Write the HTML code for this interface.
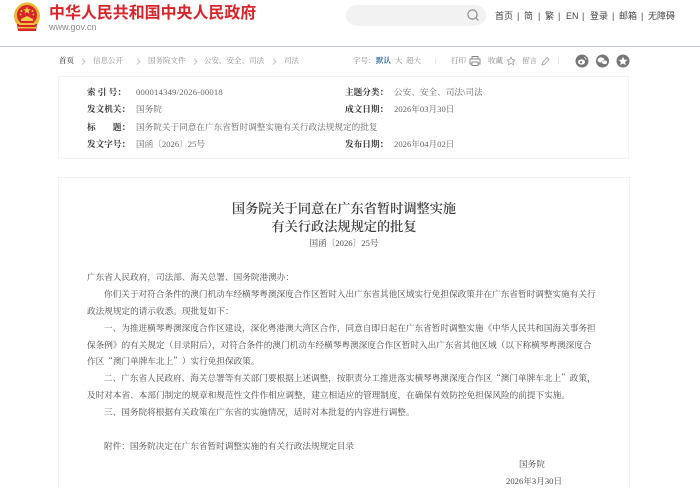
<!DOCTYPE html>
<html lang="zh-CN"><head><meta charset="utf-8"><title>国务院关于同意在广东省暂时调整实施有关行政法规规定的批复</title>
<style>
html,body{margin:0;padding:0;background:#fff;width:700px;height:488px;overflow:hidden}
#w{position:relative;width:700px;height:488px;overflow:hidden;filter:blur(.35px);font-family:"Liberation Serif","Noto Serif CJK SC",serif;color:#555}
#w div{position:absolute;white-space:nowrap}
.s{font-family:"Liberation Sans","Noto Sans CJK SC",sans-serif}
.l{font-size:8.65px;line-height:12px;color:#4a4a4a}
.c{font-family:"Noto Serif CJK SC","Liberation Serif",serif}
.k{font-size:8.65px;line-height:12px;font-weight:700;color:#333;left:87px}
.k2{left:345px}
.v{left:136px;font-size:8.65px;line-height:12px;color:#666}
.v2{left:394px}
.b{font-size:7.5px;line-height:10px;color:#8a8a8a;top:56px}
.n{font-size:9px;line-height:12px;color:#444;top:10px;font-family:"Liberation Sans","Noto Sans CJK SC",sans-serif}
.t{font-size:13.2px;line-height:18px;color:#3d3d3d;font-weight:600;left:58px;width:572px;text-align:center;font-family:"Noto Serif CJK SC",serif}
.h{position:absolute;top:58px}
</style></head><body><div id="w">
<svg style="position:absolute;left:13px;top:2px" width="28" height="31" viewBox="0 0 28 31">
<ellipse cx="14" cy="14" rx="13" ry="13.5" fill="#e9b92f"/>
<circle cx="14" cy="13" r="10" fill="#d8242a"/>
<path d="M4 22h20l-1 7H5z" fill="#d8242a"/>
<path d="M6 21h16v2H6zM5 25h18v1.500H5z" fill="#edc13a"/>
<path d="M14 4.500l1 2.800h3l-2.400 1.700.9 2.800-2.500-1.700-2.500 1.700.9-2.800L10 7.300h3z" fill="#f2cf3e"/>
<circle cx="8.500" cy="9" r="1" fill="#f2cf3e"/><circle cx="19.500" cy="9" r="1" fill="#f2cf3e"/><circle cx="7.500" cy="12.500" r=".9" fill="#f2cf3e"/><circle cx="20.500" cy="12.500" r=".9" fill="#f2cf3e"/>
<path d="M8 19v-2l6-3 6 3v2z" fill="#f2cf3e"/>
</svg>
<div class="s" style="left:49px;top:2.500px;font-size:15.95px;line-height:22px;font-weight:700;color:#d6252b">中华人民共和国中央人民政府</div>
<div class="s" style="left:49px;top:22px;font-size:9px;line-height:10px;color:#8c8c8c">www.gov.cn</div>

<div style="left:346px;top:5px;width:140px;height:21px;border-radius:11px;background:#f2f2f2"></div>
<svg style="position:absolute;left:466px;top:8px" width="14" height="14" viewBox="0 0 14 14"><circle cx="6.500" cy="6.500" r="4.600" fill="none" stroke="#8b8b8b" stroke-width="1.200"/><path d="M10 10l2.500 2.500" stroke="#8b8b8b" stroke-width="1.200"/></svg>
<div class="n" style="left:495px">首页</div><div class="n" style="left:517px">|</div>
<div class="n" style="left:524px">简</div><div class="n" style="left:538px">|</div>
<div class="n" style="left:545px">繁</div><div class="n" style="left:558px">|</div>
<div class="n" style="left:566px">EN</div><div class="n" style="left:582px">|</div>
<div class="n" style="left:590px">登录</div><div class="n" style="left:612px">|</div>
<div class="n" style="left:619px">邮箱</div><div class="n" style="left:641px">|</div>
<div class="n" style="left:648px">无障碍</div>

<div style="left:0;top:45.500px;width:700px;height:1.500px;background:#b9c8df"></div>

<div class="b" style="left:59px;font-weight:700;color:#666">首页</div>
<svg class="h" style="left:81px" width="5" height="7" viewBox="0 0 5 7"><path d="M1 .5l3 3-3 3" fill="none" stroke="#aaa" stroke-width=".7"/></svg>
<div class="b" style="left:93px">信息公开</div>
<svg class="h" style="left:136px" width="5" height="7" viewBox="0 0 5 7"><path d="M1 .5l3 3-3 3" fill="none" stroke="#aaa" stroke-width=".7"/></svg>
<div class="b" style="left:148px">国务院文件</div>
<svg class="h" style="left:193px" width="5" height="7" viewBox="0 0 5 7"><path d="M1 .5l3 3-3 3" fill="none" stroke="#aaa" stroke-width=".7"/></svg>
<div class="b" style="left:204px">公安、安全、司法</div>
<svg class="h" style="left:272px" width="5" height="7" viewBox="0 0 5 7"><path d="M1 .5l3 3-3 3" fill="none" stroke="#aaa" stroke-width=".7"/></svg>
<div class="b" style="left:284px">司法</div>

<div class="b" style="left:353px">字号：</div><div class="b" style="left:376px;color:#2a6496;font-weight:700">默认</div>
<div class="b" style="left:395px">大</div><div class="b" style="left:406px">超大</div><div class="b" style="left:435px;color:#bbb">|</div>
<div class="b" style="left:451px">打印</div>
<svg style="position:absolute;left:469px;top:55px" width="12" height="12" viewBox="0 0 12 12" fill="none" stroke="#888"><path d="M3 4V1.500h6V4M3 9H1V4h10v5H9M3 7h6v3.500H3z"/></svg>
<div class="b" style="left:488px">收藏</div>
<svg style="position:absolute;left:506px;top:56px" width="10" height="10" viewBox="0 0 10 10" fill="none" stroke="#999" stroke-width=".7"><path d="M5 1l1.200 2.700 2.900.3-2.200 1.900.7 2.900L5 7.300 2.400 8.800l.7-2.900L.9 4l2.900-.3z"/></svg>
<div class="b" style="left:522px">留言</div>
<svg style="position:absolute;left:541px;top:56px" width="9" height="10" viewBox="0 0 9 10" fill="none" stroke="#999" stroke-width=".8"><path d="M1 9l.5-2.500L6 1.500 8 3.500 3.300 8.500z"/></svg>
<div class="b" style="left:558px;color:#bbb">|</div>
<svg style="position:absolute;left:574px;top:53px" width="56" height="16" viewBox="0 0 56 16">
<circle cx="8" cy="8" r="6.500" fill="#777"/><ellipse cx="7.500" cy="9" rx="3.500" ry="2.600" fill="#fff"/><circle cx="7" cy="9.200" r="1.200" fill="#777"/><path d="M10 4.500a2 2 0 0 1 2 2.200" stroke="#fff" fill="none" stroke-width=".8"/>
<circle cx="28.500" cy="8" r="6.500" fill="#777"/><ellipse cx="27" cy="7" rx="3.400" ry="2.600" fill="#fff"/><ellipse cx="30.500" cy="9.300" rx="2.800" ry="2.100" fill="#fff" stroke="#777" stroke-width=".5"/>
<circle cx="49" cy="8" r="6.500" fill="#777"/><path d="M49 3.700l1.300 2.900 3.100.3-2.300 2.100.7 3.100-2.800-1.600-2.800 1.600.7-3.100-2.300-2.100 3.100-.3z" fill="#fff"/>
</svg>

<div style="left:58px;top:76px;width:571px;height:83px;border:1px solid #f3f3f3;box-sizing:border-box"></div>
<div style="left:58px;top:177px;width:572px;height:330px;border:1px solid #f1f1f1;box-sizing:border-box"></div>

<div class="k" style="top:86px">索 引 号：</div><div class="v" style="top:86px;letter-spacing:.2px">000014349/2026-00018</div>
<div class="k k2" style="top:86px">主题分类：</div><div class="v v2" style="top:86px">公安、安全、司法\司法</div>
<div class="k" style="top:103px">发文机关：</div><div class="v" style="top:103px">国务院</div>
<div class="k k2" style="top:103px">成文日期：</div><div class="v v2" style="top:103px">2026年03月30日</div>
<div class="k" style="top:120.500px">标　　题：</div><div class="v" style="top:120.500px">国务院关于同意在广东省暂时调整实施有关行政法规规定的批复</div>
<div class="k" style="top:138px">发文字号：</div><div class="v" style="top:138px">国函〔2026〕25号</div>
<div class="k k2" style="top:138px">发布日期：</div><div class="v v2" style="top:138px">2026年04月02日</div>

<div class="t" style="top:199px">国务院关于同意在广东省暂时调整实施</div>
<div class="t" style="top:217px">有关行政法规规定的批复</div>
<div class="l" style="left:58px;width:572px;text-align:center;top:237px">国函〔2026〕25号</div>

<div class="l c" style="left:87px;top:271px">广东省人民政府，司法部、海关总署、国务院港澳办：</div>
<div class="l c" style="left:104px;top:288px">你们关于对符合条件的澳门机动车经横琴粤澳深度合作区暂时入出广东省其他区域实行免担保政策并在广东省暂时调整实施有关行</div>
<div class="l c" style="left:87px;top:305px">政法规规定的请示收悉。现批复如下：</div>
<div class="l c" style="left:104px;top:322px">一、为推进横琴粤澳深度合作区建设，深化粤港澳大湾区合作，同意自即日起在广东省暂时调整实施《中华人民共和国海关事务担</div>
<div class="l c" style="left:87px;top:339px">保条例》的有关规定（目录附后），对符合条件的澳门机动车经横琴粤澳深度合作区暂时入出广东省其他区域（以下称横琴粤澳深度合</div>
<div class="l c" style="left:87px;top:355px">作区“澳门单牌车北上”）实行免担保政策。</div>
<div class="l c" style="left:104px;top:372px">二、广东省人民政府、海关总署等有关部门要根据上述调整，按职责分工推进落实横琴粤澳深度合作区“澳门单牌车北上”政策，</div>
<div class="l c" style="left:87px;top:389px">及时对本省、本部门制定的规章和规范性文件作相应调整，建立相适应的管理制度，在确保有效防控免担保风险的前提下实施。</div>
<div class="l c" style="left:104px;top:406px">三、国务院将根据有关政策在广东省的实施情况，适时对本批复的内容进行调整。</div>
<div class="l c" style="left:104px;top:440px">附件：国务院决定在广东省暂时调整实施的有关行政法规规定目录</div>
<div class="l c" style="left:519px;top:458px">国务院</div>
<div class="l" style="left:506px;top:475px">2026年3月30日</div>
</div></body></html>
